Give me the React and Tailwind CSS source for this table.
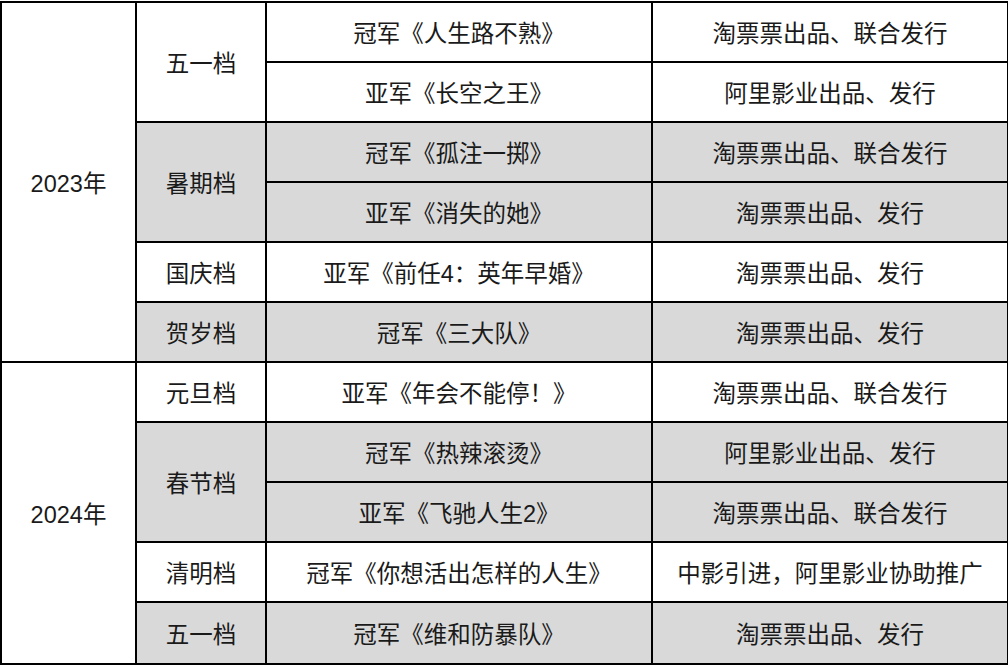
import React from "react";

const rows = [
  { year: "2023年", yearSpan: 6, period: "五一档", periodSpan: 2, film: "冠军《人生路不熟》", note: "淘票票出品、联合发行", gray: false },
  { film: "亚军《长空之王》", note: "阿里影业出品、发行", gray: false },
  { period: "暑期档", periodSpan: 2, film: "冠军《孤注一掷》", note: "淘票票出品、联合发行", gray: true },
  { film: "亚军《消失的她》", note: "淘票票出品、发行", gray: true },
  { period: "国庆档", periodSpan: 1, film: "亚军《前任4：英年早婚》", note: "淘票票出品、发行", gray: false },
  { period: "贺岁档", periodSpan: 1, film: "冠军《三大队》", note: "淘票票出品、发行", gray: true },
  { year: "2024年", yearSpan: 5, period: "元旦档", periodSpan: 1, film: "亚军《年会不能停！》", note: "淘票票出品、联合发行", gray: false },
  { period: "春节档", periodSpan: 2, film: "冠军《热辣滚烫》", note: "阿里影业出品、发行", gray: true },
  { film: "亚军《飞驰人生2》", note: "淘票票出品、联合发行", gray: true },
  { period: "清明档", periodSpan: 1, film: "冠军《你想活出怎样的人生》", note: "中影引进，阿里影业协助推广", gray: false },
  { period: "五一档", periodSpan: 1, film: "冠军《维和防暴队》", note: "淘票票出品、发行", gray: true, last: true },
];

const App = () => {
  const cell = "border-2 border-black text-center align-middle p-0 pt-[6px]";

  return (
    <div
      className="w-[1008px] h-[668px] bg-white pt-px overflow-hidden text-[23.5px] leading-none text-[#1a1a1a]"
      style={{ fontFamily: '"Liberation Sans", "Noto Sans CJK SC", sans-serif' }}
    >
      <table className="border-collapse table-fixed w-[1007px]">
        <colgroup>
          <col className="w-[135px]" />
          <col className="w-[130px]" />
          <col className="w-[386px]" />
          <col className="w-[356px]" />
        </colgroup>
        <tbody>
          {rows.map((r, i) => {
            const bg = r.gray ? "bg-[#d9d9d9]" : "bg-white";
            return (
              <tr key={i} className={r.last ? "h-[62px]" : "h-[60px]"}>
                {r.year && (
                  <td rowSpan={r.yearSpan} className={`${cell} bg-white`}>
                    {r.year}
                  </td>
                )}
                {r.period && (
                  <td rowSpan={r.periodSpan} className={`${cell} ${bg}`}>
                    {r.period}
                  </td>
                )}
                <td className={`${cell} ${bg}`}>{r.film}</td>
                <td className={`${cell} ${bg}`}>{r.note}</td>
              </tr>
            );
          })}
        </tbody>
      </table>
    </div>
  );
};

export default App;
